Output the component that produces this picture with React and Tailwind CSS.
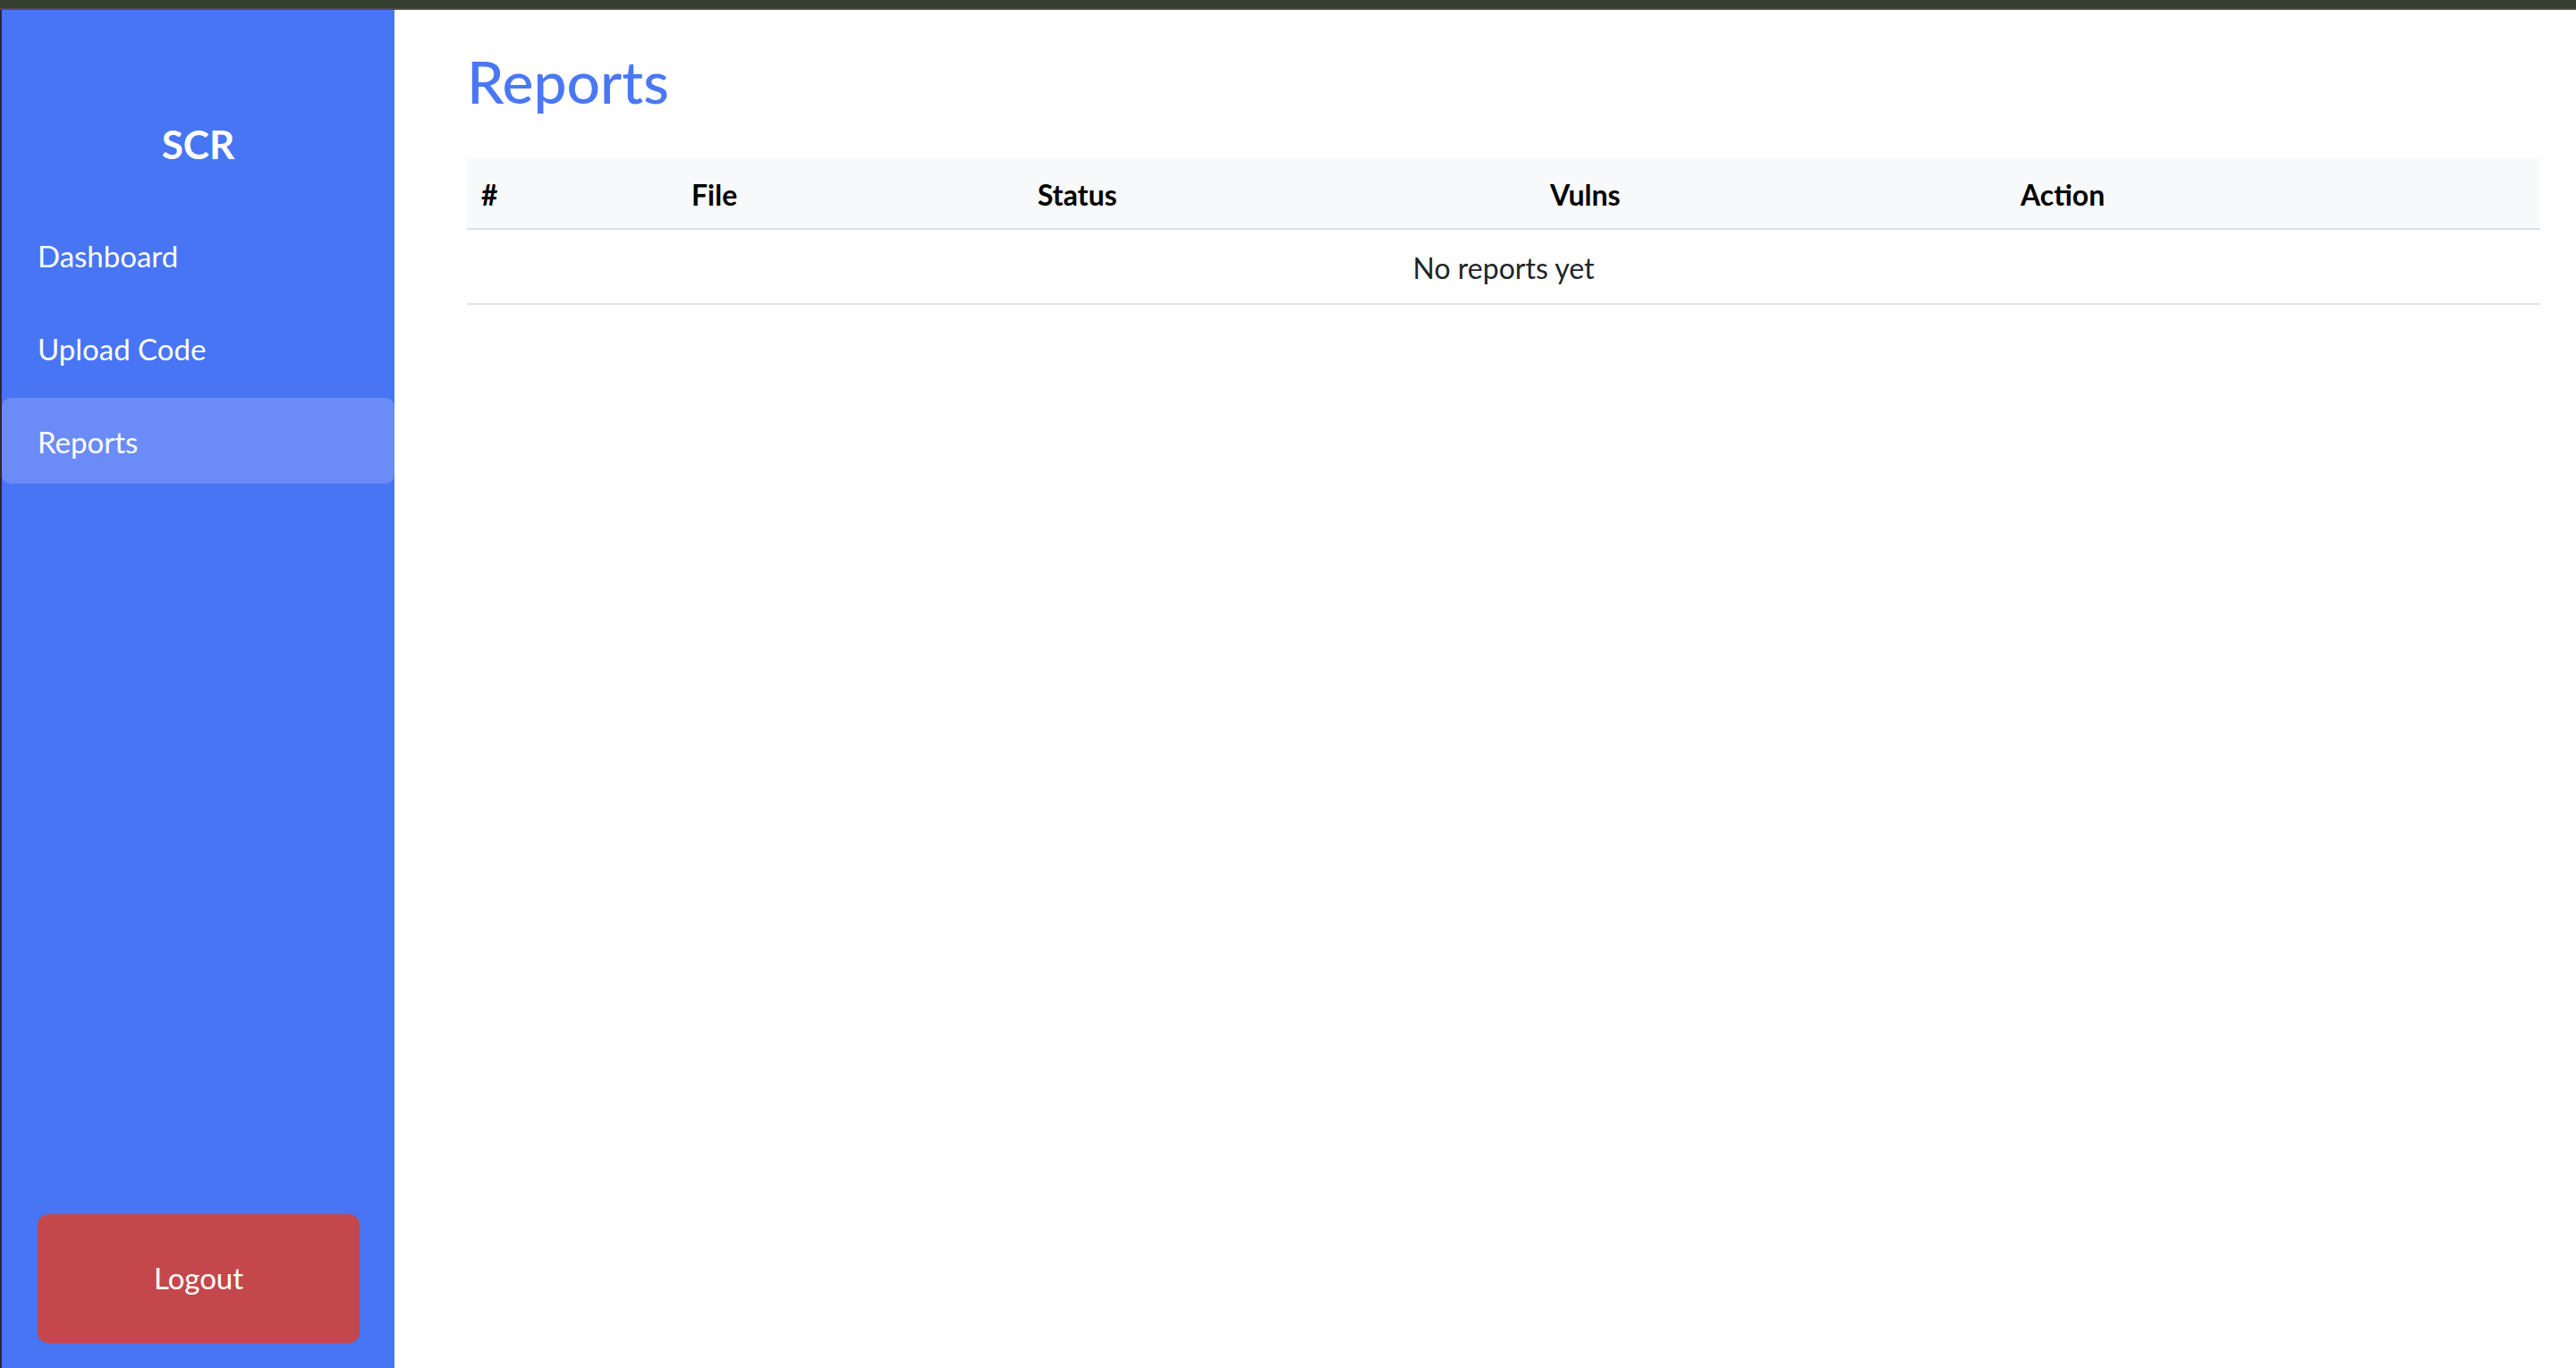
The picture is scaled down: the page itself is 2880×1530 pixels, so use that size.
import { useState } from "react";

const NAV = ["Dashboard", "Upload Code", "Reports"];

const COLUMNS = [
  { label: "#", width: "w-[235px]" },
  { label: "File", width: "w-[387px]" },
  { label: "Status", width: "w-[573px]" },
  { label: "Vulns", width: "w-[526px]" },
  { label: "Action", width: "w-[597px]" },
];

function Sidebar({ active, onSelect }) {
  return (
    <aside className="w-[441px] shrink-0 border-l-2 border-[#2b2b2b] bg-[#4775f4] flex flex-col">
      <div className="pt-[120px] mb-[46px] h-[60px] leading-[60px] box-content text-center text-[44px] font-bold text-white">
        SCR
      </div>
      <nav className="flex flex-col gap-[8px]">
        {NAV.map((item) => (
          <button
            key={item}
            onClick={() => onSelect(item)}
            className={`h-[96px] flex items-center pl-[40px] pt-[4px] rounded-[10px] text-left text-[33px] text-white ${
              active === item ? "bg-[#6b8cf6]" : ""
            }`}
          >
            {item}
          </button>
        ))}
      </nav>
      <button className="mt-auto ml-[40px] mb-[28px] w-[360px] h-[144px] rounded-[12px] bg-[#c4484b] text-white text-[33px]">
        Logout
      </button>
    </aside>
  );
}

function ReportsTable({ reports }) {
  return (
    <table className="w-full table-fixed border-collapse">
      <thead>
        <tr className="bg-[#f8f9fa]">
          {COLUMNS.map((c) => (
            <th
              key={c.label}
              className={`${c.width} h-[80px] px-[16px] pt-[4px] text-left text-[32px] font-bold text-black border-b-2 border-[#dee2e6]`}
            >
              {c.label}
            </th>
          ))}
        </tr>
      </thead>
      <tbody>
        {reports.length === 0 ? (
          <tr>
            <td colSpan={5} className="h-[84px] pt-[4px] text-center text-[32px] text-[#212529] border-b-2 border-[#dee2e6]">
              No reports yet
            </td>
          </tr>
        ) : null}
      </tbody>
    </table>
  );
}

export default function App() {
  const [active, setActive] = useState("Reports");

  return (
    <div className="h-screen flex flex-col bg-white font-['Segoe_UI',Lato,sans-serif]">
      <div className="h-[9px] shrink-0 bg-[#353f2f]" />
      <div className="h-[2px] shrink-0 bg-[#4b4d45]" />
      <div className="flex flex-1 min-h-0">
        <Sidebar active={active} onSelect={setActive} />
        <main className="flex-1 pl-[81px] pr-[40px] pt-[40px]">
          <h1 className="h-[80px] leading-[80px] mb-[45px] text-[66px] font-medium text-[#4a78f5]">Reports</h1>
          <ReportsTable reports={[]} />
        </main>
      </div>
    </div>
  );
}
